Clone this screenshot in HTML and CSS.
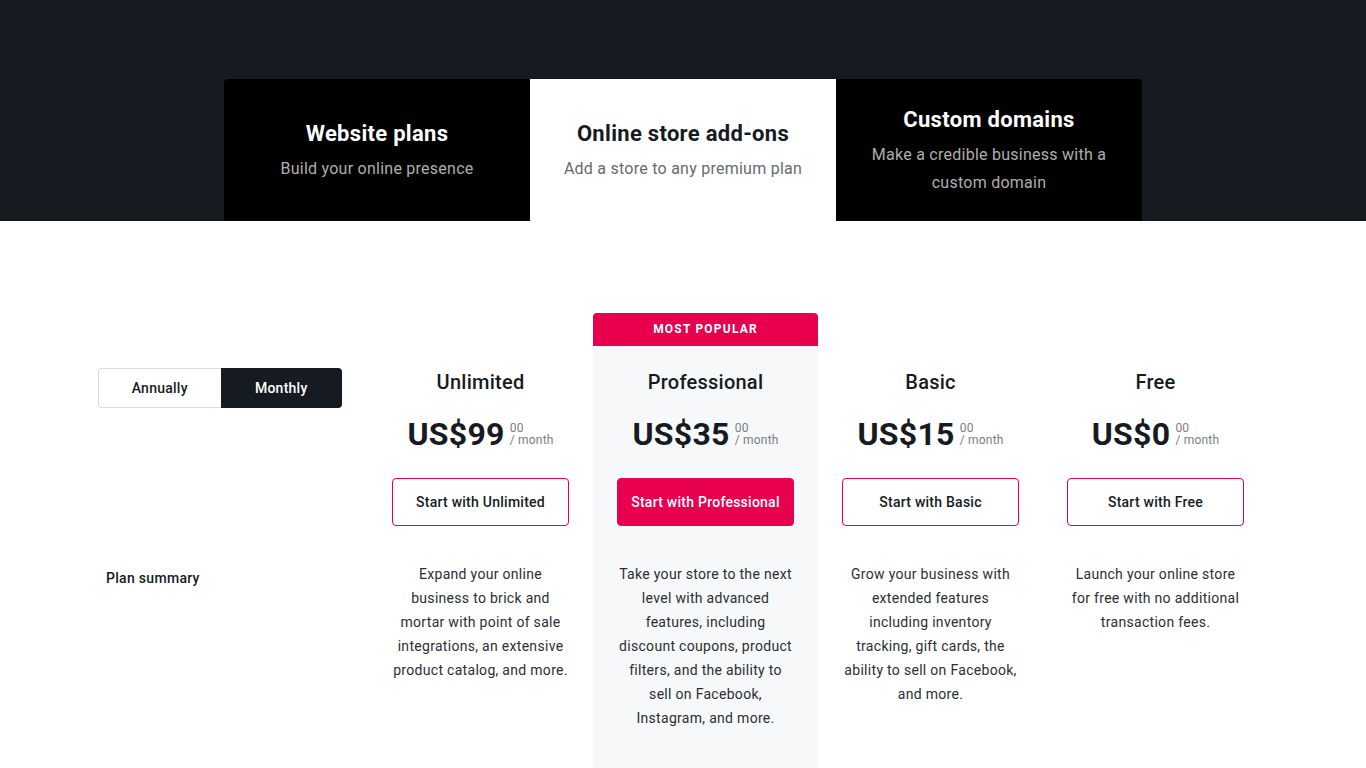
FILE: index.html
```html
<!DOCTYPE html>
<html lang="en">
<head>
<meta charset="utf-8">
<title>Pricing</title>
<link rel="stylesheet" href="styles.css">
</head>
<body>
<header class="band">
  <nav class="tabs">
    <a class="tab tab-dark tab-first">
      <span class="tab-title">Website plans</span>
      <span class="tab-sub">Build your online presence</span>
    </a>
    <a class="tab tab-light">
      <span class="tab-title">Online store add-ons</span>
      <span class="tab-sub">Add a store to any premium plan</span>
    </a>
    <a class="tab tab-dark tab-last">
      <span class="tab-title">Custom domains</span>
      <span class="tab-sub">Make a credible business with a custom domain</span>
    </a>
  </nav>
</header>
<main class="pricing">
  <div class="side">
    <div class="toggle">
      <button class="toggle-btn toggle-off">Annually</button>
      <button class="toggle-btn toggle-on">Monthly</button>
    </div>
    <div class="summary-label">Plan summary</div>
  </div>

  <section class="plan">
    <div class="badge-slot"></div>
    <div class="plan-body">
      <h2 class="plan-name">Unlimited</h2>
      <div class="price"><span class="amount">US$99</span><span class="cents"><span>00</span><span class="per">/ month</span></span></div>
      <a class="cta">Start with Unlimited</a>
      <p class="desc">Expand your online business to brick and mortar with point of sale integrations, an extensive product catalog, and more.</p>
    </div>
  </section>

  <section class="plan plan-featured">
    <div class="badge-slot badge">MOST POPULAR</div>
    <div class="plan-body">
      <h2 class="plan-name">Professional</h2>
      <div class="price"><span class="amount">US$35</span><span class="cents"><span>00</span><span class="per">/ month</span></span></div>
      <a class="cta cta-filled">Start with Professional</a>
      <p class="desc">Take your store to the next level with advanced features, including discount coupons, product filters, and the ability to sell on Facebook, Instagram, and more.</p>
    </div>
  </section>

  <section class="plan">
    <div class="badge-slot"></div>
    <div class="plan-body">
      <h2 class="plan-name">Basic</h2>
      <div class="price"><span class="amount">US$15</span><span class="cents"><span>00</span><span class="per">/ month</span></span></div>
      <a class="cta">Start with Basic</a>
      <p class="desc">Grow your business with extended features including inventory tracking, gift cards, the ability to sell on Facebook, and more.</p>
    </div>
  </section>

  <section class="plan">
    <div class="badge-slot"></div>
    <div class="plan-body">
      <h2 class="plan-name">Free</h2>
      <div class="price"><span class="amount">US$0</span><span class="cents"><span>00</span><span class="per">/ month</span></span></div>
      <a class="cta">Start with Free</a>
      <p class="desc">Launch your online store for free with no additional transaction fees.</p>
    </div>
  </section>
</main>
</body>
</html>
```

FILE: styles.css
```css
* { box-sizing: border-box; }
html, body { margin: 0; padding: 0; }
body {
  font-family: Roboto, "Liberation Sans", Arial, sans-serif;
  color: #161b22;
  background: #ffffff;
  overflow: hidden;
}

.band {
  background: #161b22;
  padding-top: 79px;
}
.tabs {
  display: flex;
  width: 918px;
  margin: 0 auto;
}
.tab {
  width: 306px;
  height: 142px;
  display: flex;
  flex-direction: column;
  align-items: center;
  justify-content: center;
  text-align: center;
  padding: 2px 32px 0;
}
.tab-dark { background: #000000; color: #ffffff; }
.tab-light { background: #ffffff; color: #161b22; }
.tab-first { border-top-left-radius: 4px; }
.tab-last { border-top-right-radius: 4px; }
.tab-title {
  font-size: 22px;
  line-height: 28px;
  font-weight: 700;
  letter-spacing: 0.3px;
}
.tab-sub {
  margin-top: 7px;
  font-size: 16px;
  line-height: 28px;
  letter-spacing: 0.25px;
}
.tab-dark .tab-sub { color: #aeaeae; }
.tab-light .tab-sub { color: #666a70; }

.pricing {
  display: grid;
  grid-template-columns: 270px repeat(4, 225px);
  width: 1170px;
  margin: 0 auto;
  padding-top: 92px;
}

.side { padding-top: 55px; }
.toggle {
  display: flex;
  width: 244px;
  height: 40px;
}
.toggle-btn {
  flex: 1;
  font-family: inherit;
  font-size: 14px;
  font-weight: 500;
  letter-spacing: 0.25px;
  border: 0;
  padding: 0;
  cursor: pointer;
}
.toggle-off {
  background: #ffffff;
  color: #161b22;
  border: 1px solid #dcdcdc;
  border-right: 0;
  border-radius: 4px 0 0 4px;
}
.toggle-on {
  background: #161b22;
  color: #ffffff;
  border-radius: 0 4px 4px 0;
}
.summary-label {
  margin-top: 158px;
  padding-left: 8px;
  font-size: 14px;
  line-height: 24px;
  font-weight: 500;
  letter-spacing: 0.3px;
}

.plan { display: flex; flex-direction: column; }
.badge-slot { height: 33px; }
.badge {
  background: #e8004f;
  color: #ffffff;
  font-size: 12px;
  font-weight: 700;
  letter-spacing: 1.2px;
  line-height: 33px;
  text-align: center;
  border-radius: 4px 4px 0 0;
}
.plan-body {
  padding: 22px 24px 48px;
  text-align: center;
}
.plan-featured .plan-body { background: #f7f8fa; min-height: 440px; }

.plan-name {
  margin: 0;
  font-size: 20px;
  line-height: 28px;
  font-weight: 500;
  letter-spacing: 0.25px;
}
.price {
  margin-top: 22px;
  display: flex;
  justify-content: center;
  align-items: flex-start;
}
.amount {
  font-size: 32px;
  line-height: 32px;
  font-weight: 700;
  letter-spacing: 0.3px;
}
.cents {
  display: flex;
  flex-direction: column;
  align-items: flex-start;
  margin-left: 5px;
  margin-top: 4px;
  font-size: 12px;
  line-height: 12px;
  color: #7a7d82;
  letter-spacing: 0.2px;
}
.cta {
  display: flex;
  align-items: center;
  justify-content: center;
  margin-top: 28px;
  height: 48px;
  border: 1px solid #e8004f;
  border-radius: 4px;
  font-size: 14px;
  font-weight: 500;
  color: #161b22;
  background: #ffffff;
  letter-spacing: 0.25px;
}
.cta-filled { background: #e8004f; color: #ffffff; }
.desc {
  margin: 36px 0 0;
  font-size: 14px;
  line-height: 24px;
  color: #2a2e33;
  letter-spacing: 0.3px;
}
```
